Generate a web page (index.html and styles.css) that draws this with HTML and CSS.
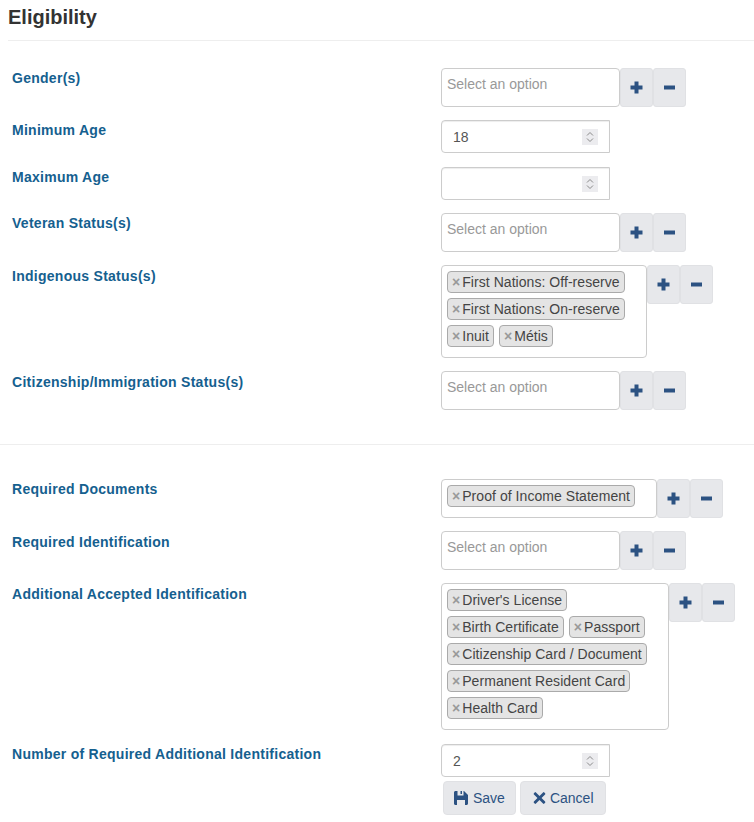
FILE: index.html
```html
<!DOCTYPE html>
<html>
    <head>
        <title>Eligibility</title>
        <link rel="stylesheet" href="styles.css">
    </head>
    <body>
        <svg class="defs" width="0" height="0">
            <symbol id="spin" viewBox="0 0 16 16">
                <path d="M5 6.500 8 3.500l3 3M5 9.500l3 3 3-3" fill="none" stroke="#8a8a8a" stroke-width="1"/>
            </symbol>
            <symbol id="plus" viewBox="0 0 13 13">
                <path d="M4.500 .5h4v4h4v4h-4v4h-4v-4h-4v-4h4z" fill="#2c5282"/>
            </symbol>
            <symbol id="minus" viewBox="0 0 13 13">
                <path d="M1 4.500h11v4H1z" fill="#2c5282"/>
            </symbol>
        </svg>

        <h1 class="titulo">Eligibility</h1>

        <div class="linha">
            <label class="rotulo">Gender(s)</label>
            <div class="campo">
                <div class="selecao vazia">Select an option</div>
                <button class="mini"><svg><use href="#plus"/></svg></button>
                <button class="mini"><svg><use href="#minus"/></svg></button>
            </div>
        </div>
        <div class="linha maior">
            <label class="rotulo">Minimum Age</label>
            <div class="campo">
                <div class="numero">18<svg class="giro"><use href="#spin"/></svg></div>
            </div>
        </div>
        <div class="linha">
            <label class="rotulo">Maximum Age</label>
            <div class="campo">
                <div class="numero"><svg class="giro"><use href="#spin"/></svg></div>
            </div>
        </div>
        <div class="linha">
            <label class="rotulo">Veteran Status(s)</label>
            <div class="campo">
                <div class="selecao vazia">Select an option</div>
                <button class="mini"><svg><use href="#plus"/></svg></button>
                <button class="mini"><svg><use href="#minus"/></svg></button>
            </div>
        </div>
        <div class="linha">
            <label class="rotulo baixo">Indigenous Status(s)</label>
            <div class="campo">
                <div class="selecao larga206">
                    <span class="tag"><i>×</i>First Nations: Off-reserve</span>
                    <span class="tag"><i>×</i>First Nations: On-reserve</span>
                    <span class="tag"><i>×</i>Inuit</span>
                    <span class="tag"><i>×</i>Métis</span>
                </div>
                <button class="mini"><svg><use href="#plus"/></svg></button>
                <button class="mini"><svg><use href="#minus"/></svg></button>
            </div>
        </div>
        <div class="linha">
            <label class="rotulo baixo">Citizenship/Immigration Status(s)</label>
            <div class="campo">
                <div class="selecao vazia">Select an option</div>
                <button class="mini"><svg><use href="#plus"/></svg></button>
                <button class="mini"><svg><use href="#minus"/></svg></button>
            </div>
        </div>

        <hr class="divisor">

        <div class="linha">
            <label class="rotulo">Required Documents</label>
            <div class="campo">
                <div class="selecao larga216">
                    <span class="tag"><i>×</i>Proof of Income Statement</span>
                </div>
                <button class="mini"><svg><use href="#plus"/></svg></button>
                <button class="mini"><svg><use href="#minus"/></svg></button>
            </div>
        </div>
        <div class="linha">
            <label class="rotulo baixo">Required Identification</label>
            <div class="campo">
                <div class="selecao vazia">Select an option</div>
                <button class="mini"><svg><use href="#plus"/></svg></button>
                <button class="mini"><svg><use href="#minus"/></svg></button>
            </div>
        </div>
        <div class="linha maior">
            <label class="rotulo baixo">Additional Accepted Identification</label>
            <div class="campo">
                <div class="selecao larga228">
                    <span class="tag"><i>×</i>Driver's License</span>
                    <span class="tag"><i>×</i>Birth Certificate</span>
                    <span class="tag"><i>×</i>Passport</span>
                    <span class="tag"><i>×</i>Citizenship Card / Document</span>
                    <span class="tag"><i>×</i>Permanent Resident Card</span>
                    <span class="tag"><i>×</i>Health Card</span>
                </div>
                <button class="mini"><svg><use href="#plus"/></svg></button>
                <button class="mini"><svg><use href="#minus"/></svg></button>
            </div>
        </div>
        <div class="linha final">
            <label class="rotulo">Number of Required Additional Identification</label>
            <div class="campo">
                <div class="numero">2<svg class="giro"><use href="#spin"/></svg></div>
            </div>
        </div>

        <div class="acoes">
            <button class="botao">
                <svg viewBox="0 0 14 14"><path d="M0 1.500C0 .7.700 0 1.500 0H10l4 4v8.500c0 .8-.7 1.500-1.500 1.500h-11C.7 14 0 13.300 0 12.500zM3.500 0v4.500h6V0H8v3H6.500V0zM3 9v5h8V9z" fill="#2c5282" fill-rule="evenodd"/></svg>
                Save
            </button>
            <button class="botao cancelar">
                <svg viewBox="0 0 14 14"><path d="M3.200 1 7 4.800 10.800 1a1 1 0 0 1 1.400 0l.8.8a1 1 0 0 1 0 1.400L9.200 7l3.800 3.800a1 1 0 0 1 0 1.400l-.8.8a1 1 0 0 1-1.400 0L7 9.200 3.200 13a1 1 0 0 1-1.400 0l-.8-.8a1 1 0 0 1 0-1.400L4.800 7 1 3.200a1 1 0 0 1 0-1.400l.8-.8a1 1 0 0 1 1.400 0z" fill="#2c5282"/></svg>
                Cancel
            </button>
        </div>
    </body>
</html>
```

FILE: styles.css
```css
body{
    margin: 0;
    font-family: "Liberation Sans", Arial, sans-serif;
    font-size: 14px;
    color: #333;
    background-color: #fff;
}
.defs{
    position: absolute;
}
.titulo{
    margin: 0 0 27px 8px;
    padding: 6px 0 11px;
    height: 23px;
    font-size: 20px;
    line-height: 23px;
    font-weight: bold;
    color: #333;
    border-bottom: 1px solid #eee;
}
.linha{
    display: grid;
    grid-template-columns: 441px 1fr;
    margin-bottom: 13px;
}
.linha.maior{
    margin-bottom: 14px;
}
.linha.final{
    margin-bottom: 4px;
}
.rotulo{
    padding: 1px 0 0 12px;
    font-size: 14px;
    line-height: 18px;
    font-weight: bold;
    letter-spacing: .27px;
    color: #15608f;
}
.rotulo.baixo{
    padding-top: 2px;
}
.campo{
    display: flex;
    align-items: flex-start;
}
.selecao{
    box-sizing: border-box;
    display: flex;
    flex-wrap: wrap;
    align-content: flex-start;
    gap: 5px;
    width: 179px;
    min-height: 39px;
    padding: 5px 5px 10px;
    background-color: #fff;
    border: 1px solid #ccc;
    border-radius: 4px;
}
.selecao.vazia{
    padding-top: 6px;
    line-height: 18px;
    color: #999;
}
.larga206{
    width: 206px;
}
.larga216{
    width: 216px;
}
.larga228{
    width: 228px;
}
.tag{
    box-sizing: border-box;
    height: 22px;
    padding: 0 4px;
    line-height: 20px;
    letter-spacing: .05px;
    white-space: nowrap;
    color: #444;
    background-color: #e4e4e4;
    border: 1px solid #aaa;
    border-radius: 4px;
}
.tag i{
    margin-right: 2px;
    font-style: normal;
    font-weight: bold;
    color: #999;
}
.mini{
    box-sizing: border-box;
    width: 33px;
    height: 39px;
    padding: 0;
    background-color: #e7e8eb;
    border: 1px solid #e0e1e4;
    border-radius: 3px;
}
.mini svg{
    display: block;
    width: 13px;
    height: 13px;
    margin: auto;
}
.numero{
    box-sizing: border-box;
    display: flex;
    justify-content: space-between;
    align-items: center;
    width: 169px;
    height: 33px;
    padding: 0 11px;
    color: #555;
    background-color: #fff;
    border: 1px solid #ccc;
    border-radius: 4px 0 0 4px;
    box-shadow: inset 0 1px 1px rgba(0,0,0,.075);
}
.giro{
    width: 16px;
    height: 16px;
    margin-left: auto;
    background-color: #ececef;
}
.acoes{
    display: flex;
    gap: 4px;
    padding-left: 443px;
}
.botao{
    box-sizing: border-box;
    display: flex;
    align-items: center;
    gap: 5px;
    height: 34px;
    padding: 0 10px;
    font-family: inherit;
    font-size: 14px;
    color: #2c5282;
    background-color: #e7e8eb;
    border: 1px solid #e0e1e4;
    border-radius: 4px;
}
.botao svg{
    width: 14px;
    height: 14px;
}
.botao.cancelar{
    gap: 4px;
    padding: 0 11px 0 12px;
}
.botao.cancelar svg{
    width: 13px;
}
.divisor{
    margin: 34px 0 34px;
    border: 0;
    border-top: 1px solid #eee;
}
```
